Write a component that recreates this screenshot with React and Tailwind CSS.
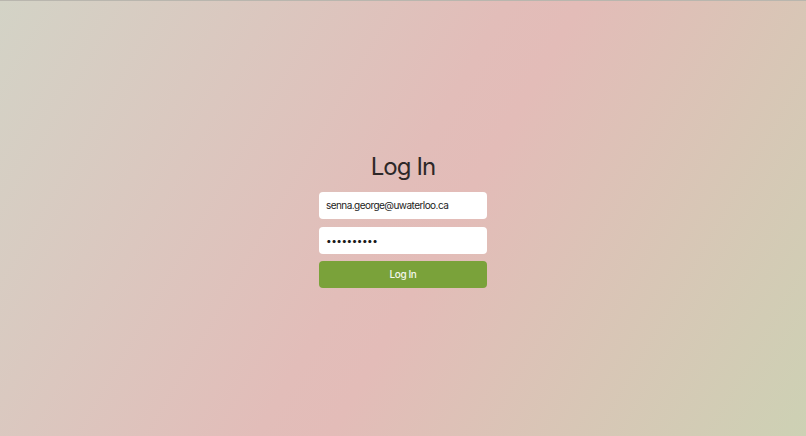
export default function App() {
  return (
    <div
      className="w-[806px] h-[436px] flex flex-col items-center border-t border-[#b9b6ae] bg-[linear-gradient(120deg,#d3d3c6_0%,#e2bdb9_48%,#e3bcb8_55%,#cdd1b4_100%)]"
      style={{ fontFamily: "Inter, 'Noto Sans', sans-serif" }}
    >
      <h1 className="mt-[150px] text-[24px] leading-[32px] tracking-[-0.9px] text-[#2d2828] font-normal">Log In</h1>
      <div className="mt-[9px] w-[168px] flex flex-col">
        <div className="h-[27px] bg-white rounded-[4px] flex items-center px-[7px] text-[10px] tracking-[-0.55px] text-[#1c1c1c]">
          senna.george@uwaterloo.ca
        </div>
        <div className="mt-[8px] h-[27px] bg-white rounded-[4px] flex items-center px-[7px] text-[10px] text-[#1c1c1c] tracking-[-0.5px]">
          ••••••••••
        </div>
        <div className="mt-[7px] h-[27px] bg-[#7aa23a] rounded-[4px] flex items-center justify-center text-[10px] tracking-[-0.4px] font-medium text-[#f4f7ee]">
          Log In
        </div>
      </div>
    </div>
  );
}
